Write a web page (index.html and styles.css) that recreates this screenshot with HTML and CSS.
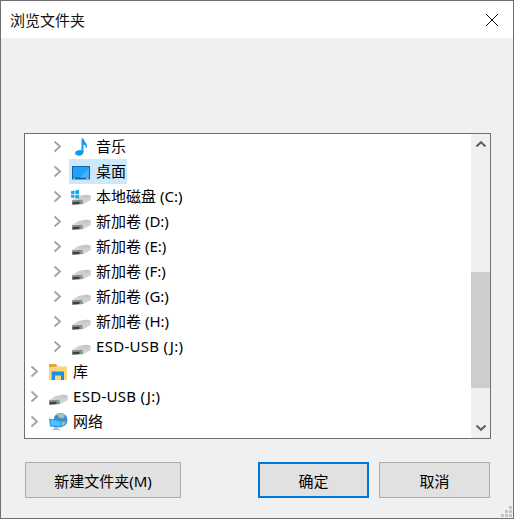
FILE: index.html
```html
<!DOCTYPE html>
<html lang="zh-CN">
<head>
    <meta charset="UTF-8">
    <title>浏览文件夹</title>
    <link rel="stylesheet" href="styles.css">
</head>
<body>
    <svg class="icon-defs" width="0" height="0">
        <defs>
            <linearGradient id="driveTop" x1="0" y1="1" x2="1" y2="0">
                <stop offset="0" stop-color="#e6e6e6"/>
                <stop offset="1" stop-color="#bdbdbd"/>
            </linearGradient>
            <symbol id="chevron" viewBox="0 0 9 13">
                <path d="M1.5 1.5 L7 6.5 L1.5 11.5" fill="none" stroke="#a6a6a6" stroke-width="2"/>
            </symbol>
            <symbol id="drive" viewBox="0 0 20 20">
                <path d="M1 13 L7.5 9 L14.5 7.8 Q19.5 7.5 19.5 9.5 L19.5 13 L12 17 L1.5 18 Q1 18 1 17 Z" fill="url(#driveTop)"/>
                <path d="M1 13.2 L11.5 12.8 L12 17 L1.5 18 Q1 18 1 17 Z" fill="#8f8f8f"/>
                <path d="M11.5 12.8 L19.5 9.5 L19.5 13 L12 17 Z" fill="#d0d0d0"/>
                <path d="M1.8 15 L8.5 14.7 L8.5 16.9 L1.8 17.2 Z" fill="#404040"/>
                <rect x="9.2" y="15" width="2" height="1" fill="#4fc04f"/>
            </symbol>
        </defs>
    </svg>

    <div class="dialog">
        <div class="titlebar">
            <span class="title">浏览文件夹</span>
            <svg class="close-icon" width="14" height="14" viewBox="0 0 14 14">
                <path d="M1 1 L13 13 M13 1 L1 13" stroke="#111" stroke-width="1" fill="none"/>
            </svg>
        </div>

        <div class="content">
            <div class="tree-box">
                <ul class="tree">
                    <li class="tree-row level-2">
                        <svg class="chevron"><use href="#chevron"/></svg>
                        <svg class="node-icon" viewBox="0 0 20 20">
                            <path d="M10.5 1.5 L12.5 1.5 C12.8 5 17.5 6.5 15.8 12 C15.3 9 14 8 12.5 7.4 L12.5 15 C12.5 17.8 9.5 19.2 6.8 18.6 C3.8 18 3.4 15.4 5.4 14 C7 13 9.2 12.8 10.5 13.4 Z" fill="#0f9bf0"/>
                        </svg>
                        <span class="node-label">音乐</span>
                    </li>
                    <li class="tree-row level-2">
                        <svg class="chevron"><use href="#chevron"/></svg>
                        <svg class="node-icon" viewBox="0 0 20 20">
                            <rect x="1" y="4" width="18" height="13.5" fill="#17639f"/>
                            <path d="M2 5 H18 V15.5 H2 Z" fill="#1ea2fb"/>
                            <path d="M9 15.5 L18 6.5 V15.5 Z" fill="#45b4fd"/>
                            <path d="M2.5 16.6 H4 M15.5 16.6 H17.5" stroke="#e4f1fb" stroke-width="1"/>
                        </svg>
                        <span class="node-label selected">桌面</span>
                    </li>
                    <li class="tree-row level-2">
                        <svg class="chevron"><use href="#chevron"/></svg>
                        <svg class="node-icon" viewBox="0 0 20 20">
                            <use href="#drive"/>
                            <path d="M0 4.2 L3.5 3.6 V7 H0 Z M4.3 3.4 L8 2.8 V7 H4.3 Z M0 7.8 H3.5 V11 L0 10.5 Z M4.3 7.8 H8 V11.6 L4.3 11 Z" fill="#12a9ee"/>
                        </svg>
                        <span class="node-label">本地磁盘 (C:)</span>
                    </li>
                    <li class="tree-row level-2">
                        <svg class="chevron"><use href="#chevron"/></svg>
                        <svg class="node-icon"><use href="#drive"/></svg>
                        <span class="node-label">新加卷 (D:)</span>
                    </li>
                    <li class="tree-row level-2">
                        <svg class="chevron"><use href="#chevron"/></svg>
                        <svg class="node-icon"><use href="#drive"/></svg>
                        <span class="node-label">新加卷 (E:)</span>
                    </li>
                    <li class="tree-row level-2">
                        <svg class="chevron"><use href="#chevron"/></svg>
                        <svg class="node-icon"><use href="#drive"/></svg>
                        <span class="node-label">新加卷 (F:)</span>
                    </li>
                    <li class="tree-row level-2">
                        <svg class="chevron"><use href="#chevron"/></svg>
                        <svg class="node-icon"><use href="#drive"/></svg>
                        <span class="node-label">新加卷 (G:)</span>
                    </li>
                    <li class="tree-row level-2">
                        <svg class="chevron"><use href="#chevron"/></svg>
                        <svg class="node-icon"><use href="#drive"/></svg>
                        <span class="node-label">新加卷 (H:)</span>
                    </li>
                    <li class="tree-row level-2">
                        <svg class="chevron"><use href="#chevron"/></svg>
                        <svg class="node-icon"><use href="#drive"/></svg>
                        <span class="node-label usb">ESD-USB (J:)</span>
                    </li>
                    <li class="tree-row level-1">
                        <svg class="chevron"><use href="#chevron"/></svg>
                        <svg class="node-icon" viewBox="0 0 20 20">
                            <path d="M1 2 H8 L10 4.5 H8 L7 5.5 H1 Z" fill="#e5a72b"/>
                            <path d="M1 5.5 H7 L8 4.5 H19 V18 H1 Z" fill="#fbd678"/>
                            <path d="M3.7 18 V9.5 H16 V18 H13 V13.5 H7 V18 Z" fill="#1e8fe0"/>
                        </svg>
                        <span class="node-label">库</span>
                    </li>
                    <li class="tree-row level-1">
                        <svg class="chevron"><use href="#chevron"/></svg>
                        <svg class="node-icon"><use href="#drive"/></svg>
                        <span class="node-label usb">ESD-USB (J:)</span>
                    </li>
                    <li class="tree-row level-1">
                        <svg class="chevron"><use href="#chevron"/></svg>
                        <svg class="node-icon" viewBox="0 0 20 20">
                            <circle cx="12.5" cy="8" r="7" fill="#3f8fd0"/>
                            <path d="M9 2.5 C11 1 15 1 17 3.5 L15 6.5 L11 5.5 Z M13 10 L18 9.5 L15 14 L13 13 Z" fill="#9fc9a8"/>
                            <path d="M1 6.5 L14 9 L13.2 15.5 L2 14.5 Z" fill="#1f9bec"/>
                            <path d="M2.3 7.8 L12.8 9.8 L12.2 14 L3 13.3 Z" fill="#58c0fb"/>
                            <path d="M6 15 H10 V17 H12 V18 H4.5 V17 H6 Z" fill="#a9bccb"/>
                        </svg>
                        <span class="node-label">网络</span>
                    </li>
                </ul>
                <div class="scrollbar">
                    <svg class="scroll-arrow" width="10" height="6" viewBox="0 0 10 6">
                        <path d="M0.5 5.5 L5 1.2 L9.5 5.5" fill="none" stroke="#606060" stroke-width="2"/>
                    </svg>
                    <div class="scroll-track">
                        <div class="scroll-thumb"></div>
                    </div>
                    <svg class="scroll-arrow" width="10" height="6" viewBox="0 0 10 6">
                        <path d="M0.5 0.5 L5 4.8 L9.5 0.5" fill="none" stroke="#606060" stroke-width="2"/>
                    </svg>
                </div>
            </div>

            <div class="button-row">
                <button class="dlg-button new-folder">新建文件夹(M)</button>
                <button class="dlg-button default">确定</button>
                <button class="dlg-button">取消</button>
            </div>
        </div>

        <svg class="grip" width="11" height="11" viewBox="0 0 11 11">
            <path d="M8 0 h3 v3 h-3 Z M4 4 h3 v3 h-3 Z M8 4 h3 v3 h-3 Z M0 8 h3 v3 h-3 Z M4 8 h3 v3 h-3 Z M8 8 h3 v3 h-3 Z" fill="#c4c4c4"/>
        </svg>
    </div>
</body>
</html>
```

FILE: styles.css
```css
* {
    margin: 0;
    padding: 0;
    box-sizing: border-box;
}

html, body {
    width: 514px;
    height: 519px;
    overflow: hidden;
}

body {
    font-family: "Noto Sans", "Noto Sans CJK SC", sans-serif;
    font-size: 15px;
    color: #000;
    background: #f0f0f0;
}

.icon-defs {
    position: absolute;
}

.dialog {
    position: relative;
    width: 514px;
    height: 519px;
    border: 1px solid #6f6f6f;
    background: #f0f0f0;
    display: flex;
    flex-direction: column;
}

.titlebar {
    height: 37px;
    flex: none;
    background: #fff;
    display: flex;
    align-items: center;
    justify-content: space-between;
    padding: 0 14px 0 9px;
}

.title {
    color: #111;
}

.content {
    flex: 1;
    padding: 95px 23px 0 23px;
}

.tree-box {
    height: 306px;
    width: 467px;
    background: #fff;
    border: 1px solid #6f6f6f;
    display: flex;
    overflow: hidden;
}

.tree {
    flex: 1;
    list-style: none;
}

.tree-row {
    height: 25px;
    display: flex;
    align-items: center;
}

.level-1 {
    padding-left: 5px;
}

.level-2 {
    padding-left: 28px;
}

.chevron {
    width: 9px;
    height: 13px;
    flex: none;
}

.node-icon {
    width: 20px;
    height: 20px;
    flex: none;
    margin-left: 9px;
    position: relative;
    z-index: 1;
}

.node-label {
    padding: 0 1px 0 5px;
    height: 25px;
    line-height: 24px;
    white-space: nowrap;
}

.node-label.usb {
    letter-spacing: 0.3px;
}

.node-label.selected {
    background: #cce8ff;
    margin-left: -22px;
    padding-left: 27px;
}

.scrollbar {
    width: 19px;
    flex: none;
    background: #f0f0f0;
    display: flex;
    flex-direction: column;
    align-items: center;
}

.scroll-arrow {
    flex: none;
    margin: 7px 0;
}

.scroll-track {
    flex: 1;
    width: 100%;
    padding-top: 118px;
}

.scroll-thumb {
    height: 116px;
    background: #cdcdcd;
}

.button-row {
    margin-top: 23px;
    display: flex;
    padding-left: 1px;
}

.dlg-button {
    width: 111px;
    height: 36px;
    background: #e1e1e1;
    border: 1px solid #adadad;
    font-family: inherit;
    font-size: 15px;
    color: #000;
    margin-left: 10px;
}

.new-folder {
    width: 156px;
    margin-left: 0;
    margin-right: 77px;
}

.dlg-button.default {
    border: 2px solid #0078d7;
    margin-left: 0;
}

.grip {
    position: absolute;
    right: 1px;
    bottom: 1px;
}
```
